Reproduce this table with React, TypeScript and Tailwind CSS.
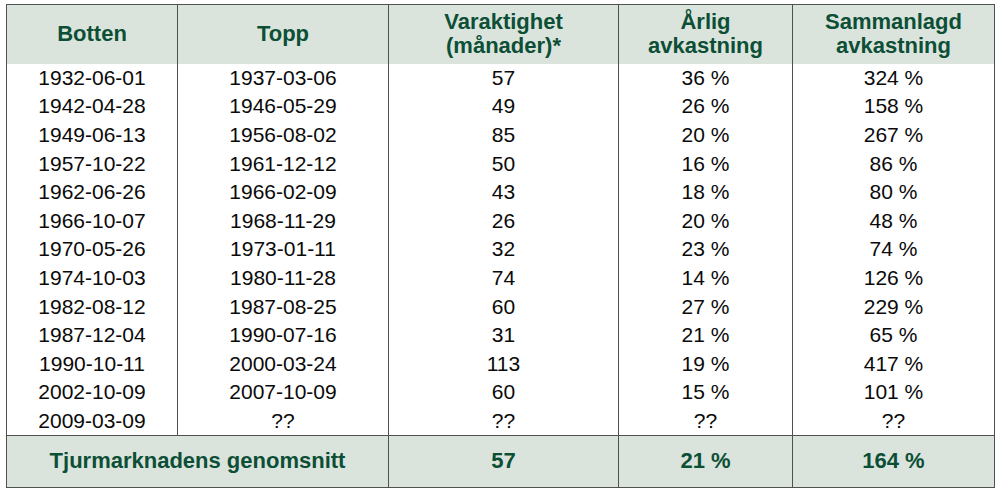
import React from 'react';

const rows: [string, string, string, string, string][] = [
  ['1932-06-01', '1937-03-06', '57', '36 %', '324 %'],
  ['1942-04-28', '1946-05-29', '49', '26 %', '158 %'],
  ['1949-06-13', '1956-08-02', '85', '20 %', '267 %'],
  ['1957-10-22', '1961-12-12', '50', '16 %', '86 %'],
  ['1962-06-26', '1966-02-09', '43', '18 %', '80 %'],
  ['1966-10-07', '1968-11-29', '26', '20 %', '48 %'],
  ['1970-05-26', '1973-01-11', '32', '23 %', '74 %'],
  ['1974-10-03', '1980-11-28', '74', '14 %', '126 %'],
  ['1982-08-12', '1987-08-25', '60', '27 %', '229 %'],
  ['1987-12-04', '1990-07-16', '31', '21 %', '65 %'],
  ['1990-10-11', '2000-03-24', '113', '19 %', '417 %'],
  ['2002-10-09', '2007-10-09', '60', '15 %', '101 %'],
  ['2009-03-09', '??', '??', '??', '??'],
];

export default function App() {
  return (
    <div className="w-[1000px] h-[495px] bg-white pt-[4px] pl-[6px]" style={{ fontFamily: '"Liberation Sans", Arial, sans-serif' }}>
      <table className="border-collapse table-fixed w-[988px] border border-[#505050] text-[21px] leading-[24px]">
        <colgroup>
          <col className="w-[171px]" />
          <col className="w-[211px]" />
          <col className="w-[230px]" />
          <col className="w-[174px]" />
          <col className="w-[202px]" />
        </colgroup>
        <thead>
          {/* Rubrikrad */}
          <tr className="bg-[#dbe4dc] text-[#0c4f36] font-bold text-[22px] h-[59px]">
            <th className="border-r border-[#505050] text-center align-middle">Botten</th>
            <th className="border-r border-[#505050] text-center align-middle">Topp</th>
            <th className="border-r border-[#505050] text-center align-middle">
              Varaktighet<br />(månader)*
            </th>
            <th className="border-r border-[#505050] text-center align-middle">
              Årlig<br />avkastning
            </th>
            <th className="text-center align-middle">
              Sammanlagd<br />avkastning
            </th>
          </tr>
        </thead>
        <tbody className="text-[#0a0a0a]">
          {rows.map((r) => (
            <tr key={r[0]} className="h-[28.6px]">
              {r.map((c, i) => (
                <td
                  key={i}
                  className={`text-center align-middle p-0 ${i < 4 ? 'border-r border-[#505050]' : ''}`}
                >
                  {c}
                </td>
              ))}
            </tr>
          ))}
          {/* Genomsnitt */}
          <tr className="bg-[#dbe4dc] text-[#0c4f36] font-bold text-[22px] h-[52px] border-t border-[#505050]">
            <td colSpan={2} className="border-r border-[#505050] text-center align-middle">
              Tjurmarknadens genomsnitt
            </td>
            <td className="border-r border-[#505050] text-center align-middle">57</td>
            <td className="border-r border-[#505050] text-center align-middle">21 %</td>
            <td className="text-center align-middle">164 %</td>
          </tr>
        </tbody>
      </table>
    </div>
  );
}
